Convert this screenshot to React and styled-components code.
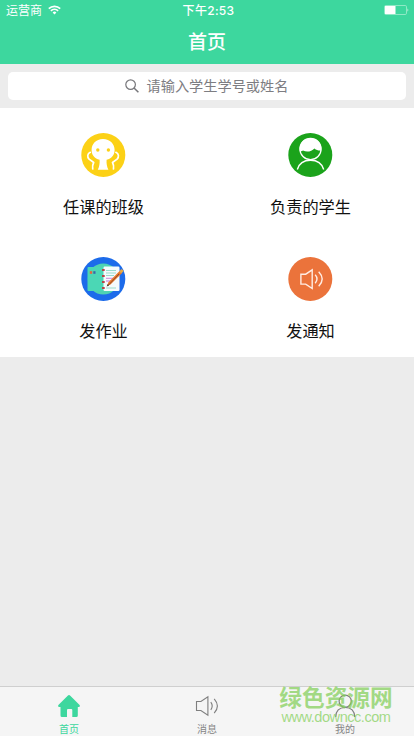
import React from "react";
import styled, { createGlobalStyle } from "styled-components";

const GlobalStyle = createGlobalStyle`
  * {
    box-sizing: border-box;
  }
  body {
    margin: 0;
    background: #ececec;
    font-family: "Liberation Sans", "Noto Sans CJK SC", sans-serif;
  }
`;

const Screen = styled.div`
  display: flex;
  flex-direction: column;
  width: 414px;
  height: 736px;
  overflow: hidden;
  background: #ececec;
`;

const Header = styled.header`
  height: 64px;
  background: #3dd79e;
  color: #fff;
`;

const StatusBar = styled.div`
  display: grid;
  grid-template-columns: 1fr auto 1fr;
  align-items: center;
  height: 21px;
  padding: 1px 5px 0 6px;
  font-size: 12px;
  line-height: 20px;
`;

const Carrier = styled.div`
  display: flex;
  align-items: center;
  gap: 6px;
  svg {
    margin-top: -2px;
  }
`;

const Time = styled.div`
  padding-left: 2px;
  font-family: Inter, "Noto Sans CJK SC", sans-serif;
  font-weight: 500;
  letter-spacing: 0.3px;
`;

const BatteryIcon = styled.svg`
  justify-self: end;
  margin-bottom: 2px;
`;

const Title = styled.h1`
  margin: 0;
  font-size: 19px;
  font-weight: 500;
  line-height: 40px;
  text-align: center;
  font-family: "Noto Sans CJK SC", sans-serif;
`;

const SearchBar = styled.div`
  height: 44px;
  padding: 8px;
`;

const SearchField = styled.div`
  display: flex;
  align-items: center;
  justify-content: center;
  gap: 8px;
  height: 28px;
  padding-right: 1px;
  border-radius: 5px;
  background: #fff;
  color: #7d7d82;
  font-size: 14.2px;
  line-height: 28px;
`;

const Menu = styled.main`
  display: grid;
  grid-template-columns: 1fr 1fr;
  grid-auto-rows: 124px;
  height: 249px;
  background: #fff;
`;

const MenuItem = styled.div`
  display: flex;
  flex-direction: column;
  align-items: center;
  padding-top: 25px;
  font-size: 16.2px;
  line-height: 24px;
  color: #111;
  svg {
    margin-bottom: 18px;
  }
`;

const TabBar = styled.nav`
  position: relative;
  display: grid;
  grid-template-columns: repeat(3, 1fr);
  height: 50px;
  margin-top: auto;
  border-top: 1px solid #cfcfcf;
  background: #f5f5f5;
`;

const Tab = styled.div`
  display: flex;
  flex-direction: column;
  align-items: center;
  padding-top: 6px;
  font-size: 10px;
  line-height: 14px;
  color: ${(props) => (props.$active ? "#3dd79e" : "#858585")};
  svg {
    margin-bottom: 4px;
  }
`;

const Watermark = styled.div`
  position: absolute;
  top: -2px;
  right: 21px;
  width: 114px;
  color: rgba(130, 207, 89, 0.72);
  text-align: center;
  white-space: nowrap;
`;

const WatermarkName = styled.div`
  font-family: "Noto Sans CJK SC", sans-serif;
  font-size: 22.7px;
  font-weight: 700;
  line-height: 24px;
`;

const WatermarkUrl = styled.div`
  margin-top: 1px;
  font-size: 14.6px;
  line-height: 14px;
  letter-spacing: -0.5px;
`;

const Wifi = () => (
  <svg width="13" height="10" viewBox="0 0 13 10" fill="none" stroke="#fff" strokeWidth="1.7">
    <path d="M.8 3.6a8.2 8.2 0 0 1 11.4 0M2.9 5.9a5.2 5.2 0 0 1 7.2 0" />
    <path d="M6.5 9.5 4.6 7.5a2.8 2.8 0 0 1 3.8 0z" fill="#fff" stroke="none" />
  </svg>
);

const Battery = () => (
  <BatteryIcon width="25" height="10" viewBox="0 0 25 10">
    <rect x=".5" y=".5" width="22" height="9" rx="1.3" fill="none" stroke="#a5edcf" strokeWidth=".8" />
    <path d="M1 1h10.5v8H1z" fill="#fff" />
    <path d="M23.6 3.2q1.4 1.8 0 3.6z" fill="#fff" />
  </BatteryIcon>
);

const Search = () => (
  <svg width="14" height="14" viewBox="0 0 14 14" fill="none" stroke="#77777b" strokeWidth="1.2">
    <circle cx="5.6" cy="5.6" r="4.8" />
    <path d="m9 9 4.4 4.3" strokeWidth="1.5" />
  </svg>
);

const ClassIcon = () => (
  <svg width="45" height="44" viewBox="0 0 45 44">
    <circle cx="22.3" cy="22" r="22" fill="#fcd116" />
    <path
      d="M22 6C14.8 6 10.6 11 10.6 17c0 5 3 8.4 8 9.8.3 3.8-.3 7-1.8 10h10.6c-1.500-3-2.100-6.200-1.800-10 5-1.400 8-4.800 8-9.800C33.600 11 29.200 6 22 6z"
      fill="#fff"
    />
    <g fill="none" stroke="#fff" strokeWidth="1.7" strokeLinecap="round" strokeLinejoin="round">
      <path d="M9.300 19.300c-3 1.500-3.300 4.500-1.200 6.800l4.600 3.400c-1.200 2-1.300 4-1 6.500M34.900 19.300c3 1.500 3.300 4.500 1.200 6.800l-4.600 3.400c1.200 2 1.300 4 1 6.500" />
    </g>
    <circle cx="16.800" cy="17" r="1.700" fill="#fcd116" />
    <circle cx="27.400" cy="17" r="1.700" fill="#fcd116" />
  </svg>
);

const StudentIcon = () => (
  <svg width="45" height="44" viewBox="0 0 45 44">
    <circle cx="22.3" cy="22" r="22" fill="#1ba31b" />
    <circle cx="22.500" cy="16" r="10.600" fill="none" stroke="#fff" strokeWidth="1.300" />
    <path
      d="M11.800 18C11 10.500 15.500 5.300 22.500 5.300S34 10.500 33.200 17.500c-2.600.4-4.800-.5-6.800-2.100-2.700 3-7.400 4.200-11.400 2.100-.9.700-2 .9-3.200.5z"
      fill="#fff"
    />
    <path d="M9.300 36.500C11 30.800 16 27.300 22.500 27.300S34 30.800 35.700 36.500" fill="none" stroke="#fff" strokeWidth="1.400" />
  </svg>
);

const HomeworkIcon = () => (
  <svg width="45" height="44" viewBox="0 0 45 44" overflow="visible">
    <circle cx="22.3" cy="22" r="22" fill="#1c6bea" />
    <circle cx="22.3" cy="22" r="15.500" fill="#4ed2b2" />
    <rect x="6.500" y="10" width="17" height="24" rx="1" fill="#4bd7b5" />
    <rect x="22.500" y="9.500" width="16" height="24.500" rx="1.200" fill="#f5fafc" />
    <path d="M8.800 14.200h2.400v2.600H8.800z" fill="#e9633c" />
    <path d="M12.300 14.200h2.200v2.600h-2.200z" fill="#3866aa" />
    <path d="M25 13.500h10M25 16h10M25 18.500h8M25 31h10" stroke="#99ddcd" />
    <path d="M25 21.300h9M25 24h5" stroke="#d79be1" strokeWidth="1.300" />
    <path d="M21 13h2.700M21 19h2.700M21 25h2.700M21 31h2.700" stroke="#b54548" strokeWidth="2" />
    <path d="m26 29 3.500-1.500L40.800 16.200l-2.200-2.300-11.300 11.700z" fill="#e87928" />
    <path d="m27.300 28.300 10.700-11.300" stroke="#743e32" strokeWidth=".8" />
    <path d="m38.200 14.300 2.500-2.200 2 2-2.400 2.500z" fill="#e7a943" />
    <path d="m25.700 29.400 1-2.300 1.400 1.300z" fill="#43322f" />
  </svg>
);

const NoticeIcon = () => (
  <svg width="45" height="44" viewBox="0 0 45 44">
    <circle cx="22.3" cy="22" r="22" fill="#eb733b" />
    <g fill="none" stroke="#ffece3" strokeWidth="1.400">
      <path d="M12.900 17.200h4.800l6.500-4.300v18.600l-6.500-4.400h-4.800z" />
      <path d="M27.200 17.800q3.600 4.200 0 8.400M30.700 14.700q7 7.300 0 14.600" />
    </g>
  </svg>
);

const HomeIcon = () => (
  <svg width="24" height="26" viewBox="0 0 24 26" fill="#3dd79e">
    <path d="M10.700 2.700q1.300-1.200 2.600 0l9.300 9.300q1.200 1.600-.7 2h-1.100v8.500q0 1.500-1.500 1.500h-4v-7q0-1-1-1h-3.300q-1 0-1 1v7H5q-1.500 0-1.500-1.500V14H2.100q-1.900-.4-.7-2z" />
  </svg>
);

const MessageIcon = () => (
  <svg width="24" height="26" viewBox="0 0 24 26" fill="none" stroke="#7f7f7f" strokeWidth="1.100">
    <path d="M1.500 8.500h4.400l7-4.700v18.400l-7-4.700H1.500z" />
    <path d="M15.800 9.200q2.800 3.800 0 7.600M19.200 5.800q6.400 7.200 0 14.400" />
  </svg>
);

const ProfileIcon = () => (
  <svg width="24" height="26" viewBox="0 0 24 26" fill="none" stroke="#7f7f7f" strokeWidth="1.200">
    <circle cx="12.200" cy="8.200" r="6.100" />
    <path d="M2.700 24q.3-9.500 9.500-9.500t9.500 9.500" />
  </svg>
);

const menuItems = [
  { title: "任课的班级", Icon: ClassIcon },
  { title: "负责的学生", Icon: StudentIcon },
  { title: "发作业", Icon: HomeworkIcon },
  { title: "发通知", Icon: NoticeIcon },
];

const tabs = [
  { title: "首页", Icon: HomeIcon },
  { title: "消息", Icon: MessageIcon },
  { title: "我的", Icon: ProfileIcon },
];

export default function App() {
  return (
    <Screen>
      <GlobalStyle />
      <Header>
        <StatusBar>
          <Carrier>
            运营商
            <Wifi />
          </Carrier>
          <Time>下午2:53</Time>
          <Battery />
        </StatusBar>
        <Title>首页</Title>
      </Header>
      <SearchBar>
        <SearchField>
          <Search />
          <span>请输入学生学号或姓名</span>
        </SearchField>
      </SearchBar>
      <Menu>
        {menuItems.map(({ title, Icon }) => (
          <MenuItem key={title}>
            <Icon />
            {title}
          </MenuItem>
        ))}
      </Menu>
      <TabBar>
        {tabs.map(({ title, Icon }, i) => (
          <Tab key={title} $active={i === 0}>
            <Icon />
            {title}
          </Tab>
        ))}
        <Watermark>
          <WatermarkName>绿色资源网</WatermarkName>
          <WatermarkUrl>www.downcc.com</WatermarkUrl>
        </Watermark>
      </TabBar>
    </Screen>
  );
}
